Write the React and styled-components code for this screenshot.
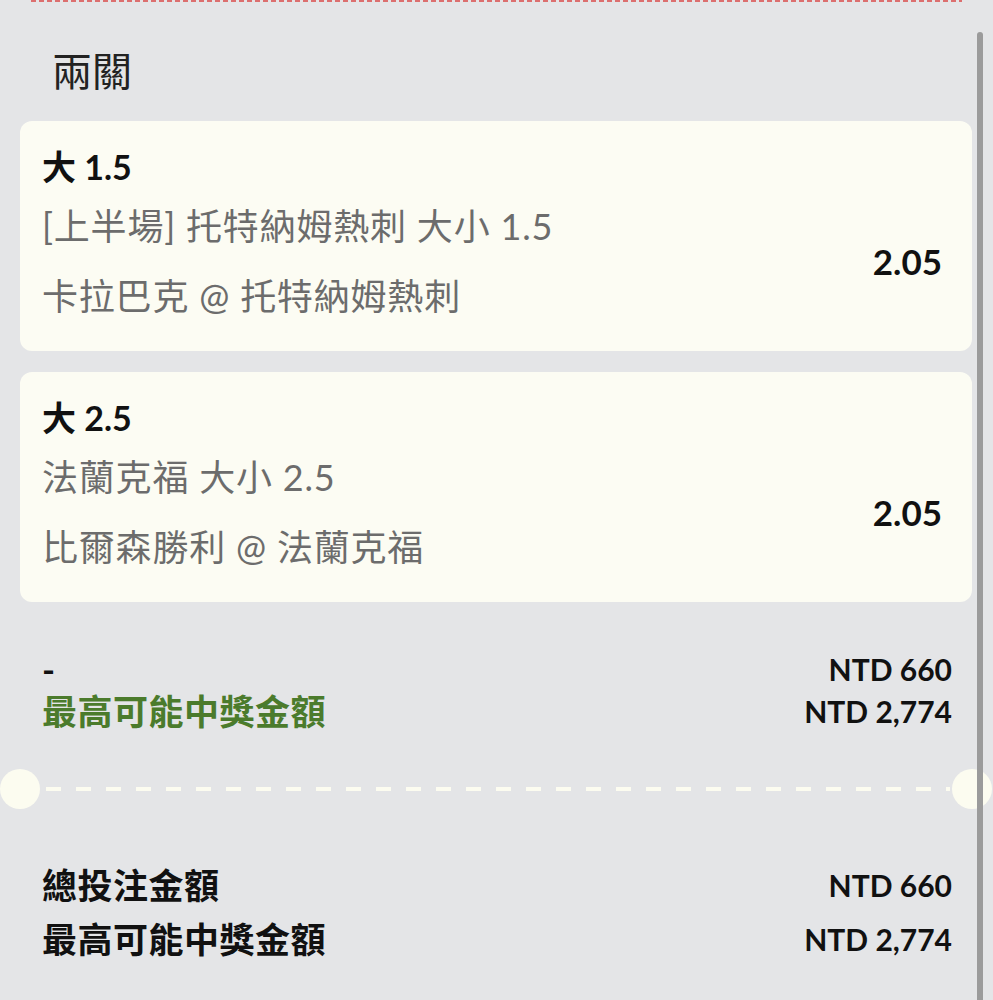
import styled, { createGlobalStyle } from 'styled-components';

const GlobalStyle = createGlobalStyle`
  html, body {
    margin: 0;
    padding: 0;
    background: #e4e5e7;
  }
  body {
    font-family: Lato, "Noto Sans CJK TC", sans-serif;
    color: #151515;
  }
`;

const legs = [
  {
    selection: '大 1.5',
    market: '[上半場] 托特納姆熱刺 大小 1.5',
    match: '卡拉巴克 @ 托特納姆熱刺',
    odds: '2.05',
  },
  {
    selection: '大 2.5',
    market: '法蘭克福 大小 2.5',
    match: '比爾森勝利 @ 法蘭克福',
    odds: '2.05',
  },
];

const App = () => {
  return (
    <Page>
      <GlobalStyle />
      <TopEdge />
      <Scrollbar />
      <Title>兩關</Title>
      <Legs>
        {legs.map((leg) => (
          <Card key={leg.market}>
            <Selection>{leg.selection}</Selection>
            <CardBody>
              <Details>
                <Line>{leg.market}</Line>
                <Line $gap>{leg.match}</Line>
              </Details>
              <Odds>{leg.odds}</Odds>
            </CardBody>
          </Card>
        ))}
      </Legs>
      <Summary>
        <SumRow>
          <SumLabel>-</SumLabel>
          <SumValue>NTD 660</SumValue>
        </SumRow>
        <SumRow>
          <SumLabel $green>最高可能中獎金額</SumLabel>
          <SumValue>NTD 2,774</SumValue>
        </SumRow>
      </Summary>
      <Divider>
        <Notch />
        <Dashes />
        <Notch />
      </Divider>
      <Totals>
        <TotalRow>
          <SumLabel>總投注金額</SumLabel>
          <SumValue>NTD 660</SumValue>
        </TotalRow>
        <TotalRow>
          <SumLabel>最高可能中獎金額</SumLabel>
          <SumValue>NTD 2,774</SumValue>
        </TotalRow>
      </Totals>
    </Page>
  );
};

export default App;

const Page = styled.div`
  position: relative;
  width: 993px;
  height: 1000px;
  overflow: hidden;
  background: #e4e5e7;
`;

const TopEdge = styled.div`
  height: 2px;
  margin: 0 31px;
  background: repeating-linear-gradient(90deg, #dc6f6f 0 5px, transparent 5px 8px);
`;

const Scrollbar = styled.div`
  position: absolute;
  top: 32px;
  right: 10px;
  width: 6px;
  height: 980px;
  border-radius: 3px;
  background: #9b9b9b;
  z-index: 2;
`;

const Title = styled.div`
  margin: 44px 0 0 52px;
  height: 50px;
  line-height: 50px;
  font-size: 40px;
  color: #222;
`;

const Legs = styled.div`
  display: flex;
  flex-direction: column;
  gap: 21px;
  margin: 25px 21px 0 20px;
`;

const Card = styled.div`
  display: flex;
  flex-direction: column;
  padding: 25px 30px 33px 22px;
  border-radius: 12px;
  background: #fcfcf3;
`;

const Selection = styled.div`
  height: 42px;
  line-height: 42px;
  font-size: 34px;
  font-weight: 700;
  color: #111;
`;

const CardBody = styled.div`
  display: flex;
  align-items: center;
  justify-content: space-between;
  margin-top: 16px;
`;

const Details = styled.div`
  display: flex;
  flex-direction: column;
`;

const Line = styled.div`
  height: 44px;
  line-height: 44px;
  font-size: 36px;
  letter-spacing: 0.8px;
  color: #6c6c6c;
  white-space: nowrap;
  margin-top: ${(p) => (p.$gap ? '26px' : '0')};
`;

const Odds = styled.div`
  font-size: 35px;
  font-weight: 700;
  color: #111;
`;

const Summary = styled.div`
  display: flex;
  flex-direction: column;
  margin: 46px 41px 0 42px;
`;

const SumRow = styled.div`
  display: flex;
  justify-content: space-between;
  align-items: center;
  height: 42px;
`;

const SumLabel = styled.div`
  line-height: 42px;
  font-size: 35px;
  letter-spacing: 0.5px;
  font-weight: 700;
  color: ${(p) => (p.$green ? '#4b7b2c' : '#111')};
`;

const SumValue = styled.div`
  line-height: 42px;
  font-size: 30px;
  font-weight: 700;
  color: #111;
`;

const Divider = styled.div`
  display: flex;
  align-items: center;
  margin: 37px 1px 0 0;
`;

const Notch = styled.div`
  width: 40px;
  height: 40px;
  border-radius: 50%;
  background: #fcfcf0;
  flex-shrink: 0;
`;

const Dashes = styled.div`
  flex: 1;
  height: 4px;
  margin: 0 2px 0 6px;
  background: repeating-linear-gradient(90deg, #fcfcf0 0 15px, transparent 15px 30px);
`;

const Totals = styled.div`
  display: flex;
  flex-direction: column;
  margin: 49px 41px 0 42px;
`;

const TotalRow = styled(SumRow)`
  height: 54px;
`;
